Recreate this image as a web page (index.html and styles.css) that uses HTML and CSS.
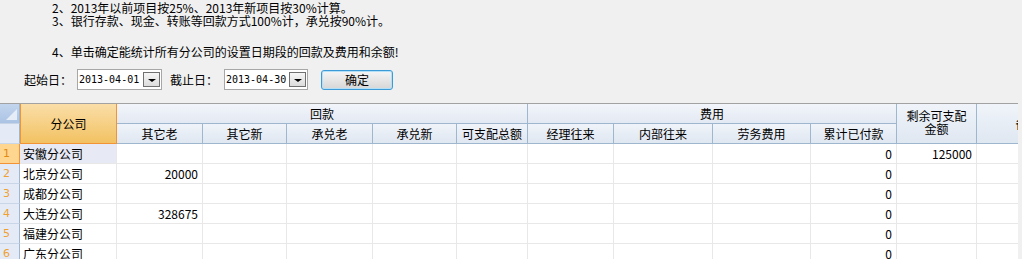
FILE: index.html
```html
<!DOCTYPE html>
<html lang="zh-CN">
<head>
    <meta charset="UTF-8">
    <title>回款及费用统计</title>
    <link rel="stylesheet" href="styles.css">
</head>
<body>
    <div class="notes">
        <p>2、2013年以前项目按25%、2013年新项目按30%计算。</p>
        <p>3、银行存款、现金、转账等回款方式100%计，承兑按90%计。</p>
        <p class="gap">4、单击确定能统计所有分公司的设置日期段的回款及费用和余额!</p>
    </div>

    <div class="query">
        <label class="lbl-start">起始日：</label>
        <div class="date date-start"><span>2013-04-01</span><span class="drop"></span></div>
        <label class="lbl-end">截止日：</label>
        <div class="date date-end"><span>2013-04-30</span><span class="drop"></span></div>
        <button class="ok-btn">确定</button>
    </div>

    <div class="sheet">
        <div class="corner"><span class="tri"></span></div>
        <div class="hd hd-sel span-rows">分公司</div>
        <div class="hd group g-back">回款</div>
        <div class="hd group g-cost">费用</div>
        <div class="hd span-rows two-line">剩余可支配<br>金额</div>
        <div class="hd span-rows">备注</div>

        <div class="rh"></div>
        <div class="hd">其它老</div>
        <div class="hd">其它新</div>
        <div class="hd">承兑老</div>
        <div class="hd">承兑新</div>
        <div class="hd">可支配总额</div>
        <div class="hd">经理往来</div>
        <div class="hd">内部往来</div>
        <div class="hd">劳务费用</div>
        <div class="hd">累计已付款</div>

        <div class="rh rh-sel">1</div>
        <div class="cell name cur">安徽分公司</div>
        <div class="cell num"></div><div class="cell num"></div><div class="cell num"></div><div class="cell num"></div><div class="cell num"></div>
        <div class="cell num"></div><div class="cell num"></div><div class="cell num"></div><div class="cell num">0</div>
        <div class="cell num">125000</div><div class="cell"></div>

        <div class="rh">2</div>
        <div class="cell name">北京分公司</div>
        <div class="cell num">20000</div><div class="cell num"></div><div class="cell num"></div><div class="cell num"></div><div class="cell num"></div>
        <div class="cell num"></div><div class="cell num"></div><div class="cell num"></div><div class="cell num">0</div>
        <div class="cell num"></div><div class="cell"></div>

        <div class="rh">3</div>
        <div class="cell name">成都分公司</div>
        <div class="cell num"></div><div class="cell num"></div><div class="cell num"></div><div class="cell num"></div><div class="cell num"></div>
        <div class="cell num"></div><div class="cell num"></div><div class="cell num"></div><div class="cell num">0</div>
        <div class="cell num"></div><div class="cell"></div>

        <div class="rh">4</div>
        <div class="cell name">大连分公司</div>
        <div class="cell num">328675</div><div class="cell num"></div><div class="cell num"></div><div class="cell num"></div><div class="cell num"></div>
        <div class="cell num"></div><div class="cell num"></div><div class="cell num"></div><div class="cell num">0</div>
        <div class="cell num"></div><div class="cell"></div>

        <div class="rh">5</div>
        <div class="cell name">福建分公司</div>
        <div class="cell num"></div><div class="cell num"></div><div class="cell num"></div><div class="cell num"></div><div class="cell num"></div>
        <div class="cell num"></div><div class="cell num"></div><div class="cell num"></div><div class="cell num">0</div>
        <div class="cell num"></div><div class="cell"></div>

        <div class="rh">6</div>
        <div class="cell name">广东分公司</div>
        <div class="cell num"></div><div class="cell num"></div><div class="cell num"></div><div class="cell num"></div><div class="cell num"></div>
        <div class="cell num"></div><div class="cell num"></div><div class="cell num"></div><div class="cell num">0</div>
        <div class="cell num"></div><div class="cell"></div>
    </div>
</body>
</html>
```

FILE: styles.css
```css
body {
    margin: 0;
    background-color: #f0f0f0;
    font-family: "Noto Sans CJK SC", "Liberation Sans", sans-serif;
    font-size: 12px;
    color: #000;
    overflow: hidden;
}

.notes {
    padding: 1px 0 0 52px;
}

.notes p {
    margin: 0;
    line-height: 13px;
    white-space: nowrap;
}

.notes .gap {
    margin-top: 18px;
}

/* query bar */
.query {
    display: flex;
    align-items: center;
    height: 21px;
    margin-top: 11px;
    padding-left: 24px;
}

.lbl-start {
    width: 53px;
}

.lbl-end {
    margin-left: 8px;
    width: 54px;
}

.date {
    box-sizing: border-box;
    height: 21px;
    display: flex;
    align-items: center;
    justify-content: space-between;
    background-color: #fff;
    border: 1px solid #a7a7a7;
    padding: 0 1px;
    font-family: "DejaVu Sans Mono", "Liberation Mono", monospace;
    font-size: 10px;
}

.date-start {
    width: 85px;
}

.date-end {
    width: 84px;
}

.drop {
    box-sizing: border-box;
    width: 17px;
    height: 15px;
    border: 1px solid #707070;
    background: linear-gradient(#f6f6f6, #dcdcdc);
    display: flex;
    align-items: flex-end;
    justify-content: center;
    padding-bottom: 4px;
}

.drop::after {
    content: "";
    border-left: 4px solid transparent;
    border-right: 4px solid transparent;
    border-top: 3px solid #000;
}

.ok-btn {
    box-sizing: border-box;
    margin-left: 13px;
    width: 72px;
    height: 20px;
    padding: 0;
    border: 1px solid #3c9bd6;
    border-radius: 3px;
    box-shadow: inset 0 0 0 1px #b4e0f7;
    background: linear-gradient(#f5f5f5, #e6e6e6 50%, #d6d6d6);
    font-family: "Noto Sans CJK SC", sans-serif;
    font-size: 12px;
    color: #000;
    line-height: 16px;
}

/* grid */
.sheet {
    margin-top: 13px;
    width: 1018px;
    overflow: hidden;
    border-top: 1px solid #a2a2a2;
    display: grid;
    grid-template-columns: 20px 97px 86px 84px 86px 84px 71px 86px 99px 98px 86px 80px 102px;
    grid-auto-rows: 20px;
    background-color: #fff;
}

.sheet > div {
    box-sizing: border-box;
    white-space: nowrap;
    overflow: hidden;
}

.corner {
    background: linear-gradient(#c3d5ee, #abc3e4);
    border-right: 1px solid #9eb6ce;
    border-bottom: 1px solid #c6d4e6;
    display: flex;
    align-items: flex-end;
    justify-content: flex-end;
    padding: 0 2px 3px 0;
}

.tri {
    border-left: 11px solid transparent;
    border-bottom: 11px solid #e6edf7;
}

.hd {
    background: linear-gradient(#f0f4fa, #dfe7f1);
    border-right: 1px solid #9eb6ce;
    border-bottom: 1px solid #9eb6ce;
    display: flex;
    align-items: center;
    justify-content: center;
    line-height: 13px;
}

.span-rows {
    grid-row: span 2;
}

.two-line {
    text-align: center;
    padding-bottom: 3px;
}

.hd-sel {
    background: linear-gradient(#fadea8, #f2c262);
    border-left: 1px solid #f29436;
    border-right: 1px solid #f29436;
    border-bottom: 1px solid #f29436;
}

.group {
    background: linear-gradient(#f2f5fa, #e3e9f3);
}

.g-back {
    grid-column: span 5;
}

.g-cost {
    grid-column: span 4;
}

.rh {
    background-color: #e4ebf6;
    border-right: 1px solid #9eb6ce;
    border-bottom: 1px solid #c9d6e8;
    color: #f0a030;
    padding-left: 3px;
    line-height: 19px;
    font-family: "DejaVu Sans", sans-serif;
    font-size: 11px;
}

.rh-sel {
    background-color: #fed690;
    border-right: 1px solid #f29436;
    border-bottom: 1px solid #f29436;
    color: #e08a10;
}

.cell {
    border-right: 1px solid #e8e8e8;
    border-bottom: 1px solid #e8e8e8;
    line-height: 19px;
}

.name {
    padding-left: 3px;
}

.cur {
    background-color: #e7eaf5;
}

.num {
    text-align: right;
    padding-right: 4px;
}
```
